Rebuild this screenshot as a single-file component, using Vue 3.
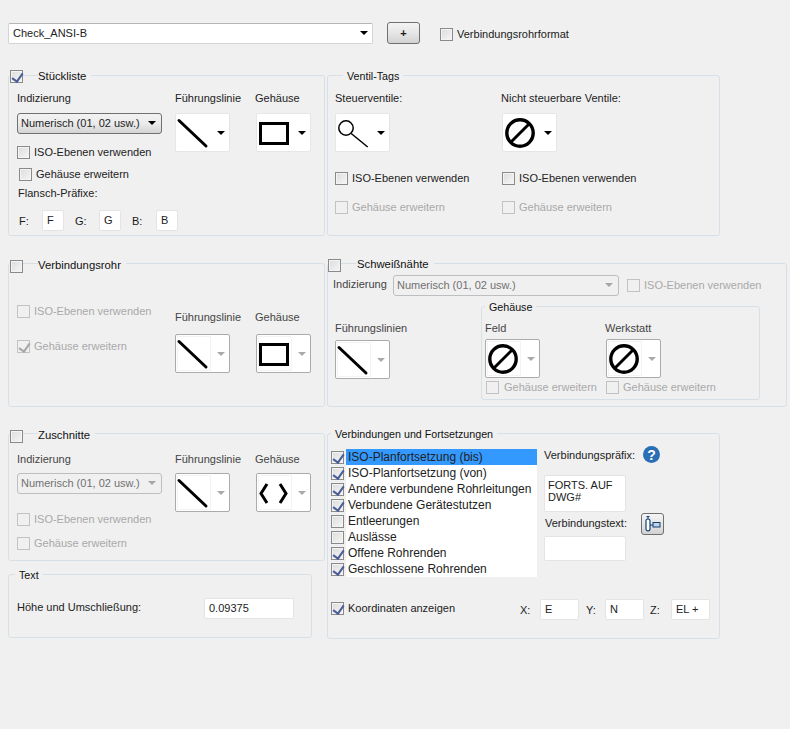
<script setup>
const items = [
  { t: 'ISO-Planfortsetzung (bis)', c: true, s: true },
  { t: 'ISO-Planfortsetzung (von)', c: true },
  { t: 'Andere verbundene Rohrleitungen', c: true },
  { t: 'Verbundene Gerätestutzen', c: true },
  { t: 'Entleerungen', c: false },
  { t: 'Auslässe', c: false },
  { t: 'Offene Rohrenden', c: true },
  { t: 'Geschlossene Rohrenden', c: true }
]
</script>

<template>
  <div class="page">
    <svg class="defs" width="0" height="0">
      <symbol id="ln" viewBox="0 0 36 39"><path d="M4 7.5 31 33" stroke="#000" stroke-width="3" stroke-linecap="round" fill="none"/></symbol>
      <symbol id="bx" viewBox="0 0 36 39"><rect x="4.5" y="10.5" width="27" height="20" stroke="#000" stroke-width="3" fill="none"/></symbol>
      <symbol id="mg" viewBox="0 0 36 39"><circle cx="11" cy="15" r="7.2" stroke="#000" stroke-width="1.5" fill="none"/><path d="M16.2 20.5 32.7 34" stroke="#000" stroke-width="1.5" fill="none"/></symbol>
      <symbol id="no" viewBox="0 0 36 39"><circle cx="18" cy="20" r="13.2" stroke="#000" stroke-width="3.4" fill="none"/><path d="M9 29 27 11" stroke="#000" stroke-width="3" fill="none"/></symbol>
      <symbol id="br" viewBox="0 0 36 39"><path d="M11 11 5 20.5 11 30M24 11 30 20.5 24 30" stroke="#000" stroke-width="3" fill="none"/></symbol>
    </svg>

    <div class="top">
      <div class="combo"><span>Check_ANSI-B</span><i class="arrow"></i></div>
      <div class="btn plus">+</div>
      <span class="cb"></span>
      <span class="topl">Verbindungsrohrformat</span>
    </div>

    <div class="grid">
      <!-- Stückliste -->
      <section class="panel stk">
        <span class="cb lcb on"></span><span class="legend chk">Stückliste</span>
        <div class="col c158">
          <div class="lb">Indizierung</div>
          <div class="sel mt8"><span>Numerisch (01, 02 usw.)</span><i class="arrow"></i></div>
          <div class="cr mt12"><span class="cb"></span>ISO-Ebenen verwenden</div>
          <div class="cr mt9 ml2"><span class="cb"></span>Gehäuse erweitern</div>
          <div class="lb mt5 ml1">Flansch-Präfixe:</div>
          <div class="flange">
            <span class="fl f1">F:</span><div class="inp w22">F</div>
            <span class="fl f2">G:</span><div class="inp w22">G</div>
            <span class="fl f2">B:</span><div class="inp w22">B</div>
          </div>
        </div>
        <div class="col c80">
          <div class="lb">Führungslinie</div>
          <div class="pick mt8"><div class="cell"><svg><use href="#ln"/></svg></div><i class="arrow"></i></div>
        </div>
        <div class="col">
          <div class="lb">Gehäuse</div>
          <div class="pick mt8 ml1"><div class="cell"><svg><use href="#bx"/></svg></div><i class="arrow"></i></div>
        </div>
      </section>

      <!-- Ventil-Tags -->
      <section class="panel vt">
        <span class="legend plain vtl">Ventil-Tags</span>
        <div class="col c166">
          <div class="lb">Steuerventile:</div>
          <div class="pick mt8"><div class="cell"><svg><use href="#mg"/></svg></div><i class="arrow"></i></div>
          <div class="cr mt20"><span class="cb"></span>ISO-Ebenen verwenden</div>
          <div class="cr mt16 dis"><span class="cb off"></span>Gehäuse erweitern</div>
        </div>
        <div class="col">
          <div class="lb">Nicht steuerbare Ventile:</div>
          <div class="pick mt8 ml1"><div class="cell"><svg><use href="#no"/></svg></div><i class="arrow"></i></div>
          <div class="cr mt20 ml1"><span class="cb"></span>ISO-Ebenen verwenden</div>
          <div class="cr mt16 ml1 dis"><span class="cb off"></span>Gehäuse erweitern</div>
        </div>
      </section>

      <!-- Verbindungsrohr -->
      <section class="panel vr">
        <span class="cb lcb"></span><span class="legend chk">Verbindungsrohr</span>
        <div class="col c158 vrl">
          <div class="cr dis"><span class="cb off"></span>ISO-Ebenen verwenden</div>
          <div class="cr mt22 dis"><span class="cb off on"></span>Gehäuse erweitern</div>
        </div>
        <div class="col c80 vrr">
          <div class="lb dk">Führungslinie</div>
          <div class="pick pd mt10"><div class="cell"><svg><use href="#ln"/></svg></div><i class="arrow"></i></div>
        </div>
        <div class="col vrr">
          <div class="lb dk">Gehäuse</div>
          <div class="pick pd mt10 ml1"><div class="cell"><svg><use href="#bx"/></svg></div><i class="arrow"></i></div>
        </div>
      </section>

      <!-- Schweißnähte -->
      <section class="panel sw">
        <span class="cb lcb sw-cb"></span><span class="legend chk sw-l">Schweißnähte</span>
        <div class="sw1">
          <div class="lb dk swlab">Indizierung</div>
          <div class="sel seld w226"><span>Numerisch (01, 02 usw.)</span><i class="arrow"></i></div>
          <div class="cr dis ml8"><span class="cb off"></span>ISO-Ebenen verwenden</div>
        </div>
        <div class="sw2">
          <div class="col swf">
            <div class="lb dk">Führungslinien</div>
            <div class="pick pd mt5"><div class="cell"><svg><use href="#ln"/></svg></div><i class="arrow"></i></div>
          </div>
          <div class="group">
            <span class="legend plain gl">Gehäuse</span>
            <div class="col c120">
              <div class="lb dk">Feld</div>
              <div class="pick pd mt4"><div class="cell"><svg><use href="#no"/></svg></div><i class="arrow"></i></div>
              <div class="cr mt3 ml1 dis g5"><span class="cb off"></span>Gehäuse erweitern</div>
            </div>
            <div class="col">
              <div class="lb dk">Werkstatt</div>
              <div class="pick pd mt4 ml1"><div class="cell"><svg><use href="#no"/></svg></div><i class="arrow"></i></div>
              <div class="cr mt3 ml1 dis"><span class="cb off"></span>Gehäuse erweitern</div>
            </div>
          </div>
        </div>
      </section>

      <!-- left bottom stack -->
      <div class="stack">
        <section class="panel zu">
          <span class="cb lcb"></span><span class="legend chk">Zuschnitte</span>
          <div class="col c158">
            <div class="lb dk">Indizierung</div>
            <div class="sel seld mt7"><span>Numerisch (01, 02 usw.)</span><i class="arrow"></i></div>
            <div class="cr mt19 dis"><span class="cb off"></span>ISO-Ebenen verwenden</div>
            <div class="cr mt11 dis"><span class="cb off"></span>Gehäuse erweitern</div>
          </div>
          <div class="col c80">
            <div class="lb dk">Führungslinie</div>
            <div class="pick pd mt7"><div class="cell"><svg><use href="#ln"/></svg></div><i class="arrow"></i></div>
          </div>
          <div class="col">
            <div class="lb dk">Gehäuse</div>
            <div class="pick pd mt7 ml1"><div class="cell"><svg><use href="#br"/></svg></div><i class="arrow"></i></div>
          </div>
        </section>
        <section class="panel tx">
          <span class="legend plain">Text</span>
          <div class="lb txl">Höhe und Umschließung:</div>
          <div class="inp w90">0.09375</div>
        </section>
      </div>

      <!-- Verbindungen -->
      <section class="panel vb">
        <span class="legend plain vbl">Verbindungen und Fortsetzungen</span>
        <div class="vbt">
          <div class="list">
            <div v-for="it in items" :key="it.t" class="row">
              <span class="cb" :class="{ on: it.c }"></span>
              <span class="rowt" :class="{ sel2: it.s }">{{ it.t }}</span>
            </div>
          </div>
          <div class="vbr">
            <div class="hrow">
              <span class="lb w99">Verbindungspräfix:</span>
              <svg class="help" width="17" height="17" viewBox="0 0 17 17"><circle cx="8.5" cy="8.5" r="8.5" fill="#2a6fb5"/><text x="8.5" y="13.5" text-anchor="middle" class="q">?</text></svg>
            </div>
            <div class="inp ta">FORTS. AUF<br>DWG#</div>
            <div class="vrow">
              <span class="lb w96">Verbindungstext:</span>
              <div class="btn ib">
                <svg width="21" height="18" viewBox="0 0 21 18"><path d="M4 5.5C4 3.5 8 3.5 8 5.5V14C8 16.5 4 16.5 4 14Z M6 1.5V3.8 M4.5 1.5H7.5 M8 10H11" fill="#fff" stroke="#123f73" stroke-width="1.2"/><rect x="11" y="7.5" width="7" height="4.5" fill="#bcd4ea" stroke="#123f73"/></svg>
              </div>
            </div>
            <div class="inp vi"></div>
          </div>
        </div>
        <div class="vbb">
          <div class="cr w189"><span class="cb on"></span>Koordinaten anzeigen</div>
          <span class="lb w20">X:</span><div class="inp w39">E</div>
          <span class="lb w19 ml7">Y:</span><div class="inp w39">N</div>
          <span class="lb w21 ml6">Z:</span><div class="inp w39">EL +</div>
        </div>
      </section>
    </div>
  </div>
</template>

<style scoped>
* { box-sizing: border-box; }
.page {
  width: 790px; height: 729px; background: #f0f0f0; padding: 22px 0 0 8px; overflow: hidden;
  font: 11px/14px "Liberation Sans", Arial, sans-serif; color: #1a1a1a;
}
.defs { position: absolute; }
.top { display: flex; align-items: flex-start; height: 22px; margin-bottom: 31px; }
.combo {
  width: 365px; height: 21px; margin-top: 1px; background: #fff; border: 1px solid #d4d4d4; border-top-color: #b5b5b5; border-radius: 2px;
  display: flex; align-items: center; justify-content: space-between; padding: 0 4px 1px 4px; color: #222;
}
.arrow { display: block; width: 0; height: 0; border: 4px solid transparent; border-bottom: 0; border-top-color: #000; flex: none; }
.btn {
  background: linear-gradient(#f4f4f4, #e6e6e6 50%, #d2d2d2); border: 1px solid #707070; border-radius: 3px;
  display: flex; align-items: center; justify-content: center;
}
.plus { width: 33px; height: 22px; margin-left: 14px; font-size: 11px; font-weight: bold; }
.top .cb { margin: 6px 0 0 20px; }
.topl { margin: 5px 0 0 4px; }
.cb {
  display: block; width: 13px; height: 13px; flex: none; position: relative;
  border: 1px solid #8a8a8a; background: linear-gradient(135deg, #dcdcdc, #f6f6f6);
  box-shadow: inset 0 0 0 1px #f4f4f4;
}
.cb.on::after {
  content: ""; position: absolute; left: 3px; top: 0; width: 5px; height: 9px;
  border: solid #4a5d98; border-width: 0 2px 2px 0; transform: rotate(35deg);
}
.cb.off { border-color: #c2c2c2; background: #f0f0f0; box-shadow: none; }
.cb.off.on::after { border-color: #a6a6a6; }
.grid { display: grid; grid-template-columns: 317px auto; column-gap: 2px; grid-template-rows: 161px 144px 205px; row-gap: 27px; justify-content: start; }
.grid > :nth-child(n+5) { margin-top: -1px; }
.panel { position: relative; border: 1px solid #d7e0e6; border-radius: 3px; display: flex; }
.legend { position: absolute; top: -7px; left: 0; background: #f0f0f0; height: 14px; white-space: nowrap; color: #111; font-size: 11.3px; }
.vr .legend, .zu .legend { top: -6px; }
.legend.chk { left: 29px; padding: 0 5px 0 0; }
.legend.plain { left: 6px; padding: 0 4px; font-size: 10.7px; top: -7px; }
.legend.vtl { left: 15px; }
.legend.vbl { left: 3px; }
.lcb { position: absolute; left: 1px; top: -5px; z-index: 1; }
.stk .lcb { top: -6px; }
.vr .lcb, .zu .lcb { top: -4px; }
.col { display: flex; flex-direction: column; align-items: flex-start; }
.c158 { width: 158px; }
.c80 { width: 80px; }
.c120 { width: 120px; }
.c166 { width: 166px; }
.lb { height: 14px; white-space: nowrap; color: #222; }
.lb.dk { color: #444; }
.mt3 { margin-top: 3px; } .mt4 { margin-top: 4px; } .mt5 { margin-top: 5px; } .mt7 { margin-top: 7px; } .mt8 { margin-top: 8px; }
.mt9 { margin-top: 9px; } .mt10 { margin-top: 10px; } .mt11 { margin-top: 11px; } .mt12 { margin-top: 12px; } .mt16 { margin-top: 16px; }
.mt19 { margin-top: 19px; } .mt20 { margin-top: 20px; } .mt22 { margin-top: 22px; }
.ml1 { margin-left: 1px; } .ml2 { margin-left: 2px; } .ml6 { margin-left: 6px; } .ml7 { margin-left: 7px; } .ml8 { margin-left: 8px; }
.cr { display: flex; align-items: flex-start; gap: 4px; height: 13px; line-height: 12px; white-space: nowrap; color: #222; }
.cr.g5 { gap: 5px; }
.cr.dis { color: #a9a9a9; }
.sel {
  width: 145px; height: 21px; border: 1px solid #707070; border-radius: 3px; padding: 0 3px 1px 3px;
  background: linear-gradient(#f2f2f2, #ebebeb 50%, #d4d4d4);
  display: flex; align-items: center; justify-content: space-between; color: #222;
}
.sel .arrow { margin-right: 2px; }
.seld { background: #f0f0f0; border-color: #bcbfc1; color: #707070; }
.seld .arrow { border-top-color: #a6a6a6; }
.w226 { width: 226px; }
.pick { width: 55px; height: 39px; background: #fff; border: 1px solid #e6e6e6; border-radius: 2px; display: flex; align-items: flex-start; }
.cell { width: 34px; height: 35px; margin: 1px 0 0 1px; border: 1px solid transparent; }
.cell svg { display: block; width: 36px; height: 39px; margin: -3px 0 0 -3px; overflow: visible; }
.pick .arrow { margin: 17px 0 0 6px; }
.pd { border-color: #ababab; }
.pd .cell { border-color: #f3f3f3; }
.pd .arrow { border-top-color: #a9a9a9; }
.inp { height: 21px; background: #fff; border: 1px solid #e4e4e4; border-radius: 2px; padding: 2px 0 0 4px; white-space: nowrap; color: #222; }
.w22 { width: 22px; } .w39 { width: 39px; } .w90 { width: 90px; }
.flange { display: flex; align-items: center; margin-top: 10px; }
.fl { width: 24px; }
.f1 { margin-left: 2px; width: 23px; }
.f2 { margin-left: 11px; }

.stk { padding: 15px 0 0 8px; }
.vt { padding: 15px 0 0 7px; width: 393px; }
.vr { padding-left: 8px; }
.vrl { padding-top: 41px; }
.vrr { padding-top: 46px; }
.sw { display: block; padding: 11px 0 0 5px; width: 460px; }
.sw-cb { left: 0; top: -5px; }
.sw-l { left: 28px; }
.sw1 { display: flex; align-items: center; }
.swlab { width: 60px; margin-top: -3px; }
.sw2 { display: flex; margin-top: 10px; }
.swf { width: 146px; margin-left: 2px; padding-top: 15px; }
.group { position: relative; display: flex; width: 279px; height: 94px; border: 1px solid #d7e0e6; border-radius: 3px; padding: 14px 0 0 3px; }
.legend.gl { left: 3px; top: -7px; }
.stack { display: flex; flex-direction: column; gap: 13px; }
.zu { height: 128px; padding: 18px 0 0 8px; }
.tx { width: 304px; height: 64px; padding: 23px 0 0 8px; align-items: flex-start; }
.txl { width: 187px; padding-top: 2px; height: 17px; }
.vb { display: block; padding: 12px 0 0 3px; width: 393px; }
.vbt { display: flex; }
.list { width: 206px; margin-top: 3px; }
.row { display: flex; align-items: center; gap: 2px; height: 16px; }
.rowt { flex: 1; height: 16px; background: #fff; line-height: 15px; padding: 1px 0 0 2px; font-size: 12px; white-space: nowrap; color: #222; }
.rowt.sel2 { background: #3399ff; }
.vbr { margin-left: 7px; width: 140px; }
.hrow { display: flex; align-items: center; height: 17px; }
.w99 { width: 99px; } .w96 { width: 96px; margin: -2px 0 0 1px; }
.w20 { width: 20px; } .w19 { width: 19px; } .w21 { width: 21px; }
.help { display: block; flex: none; }
.q { font: bold 14px "Liberation Sans", sans-serif; fill: #fff; }
.ta { width: 82px; height: 37px; margin-top: 12px; line-height: 12px; padding: 3px 0 0 3px; }
.vrow { display: flex; align-items: center; height: 22px; margin-top: 1px; }
.ib { width: 23px; height: 22px; flex: none; }
.ib svg { display: block; }
.vi { width: 82px; height: 25px; margin-top: 1px; }
.vbb { display: flex; align-items: center; margin-top: 22px; height: 21px; }
.w189 { width: 189px; margin-top: -2px; }
</style>

<style>
body { margin: 0; background: #f0f0f0; }
</style>
